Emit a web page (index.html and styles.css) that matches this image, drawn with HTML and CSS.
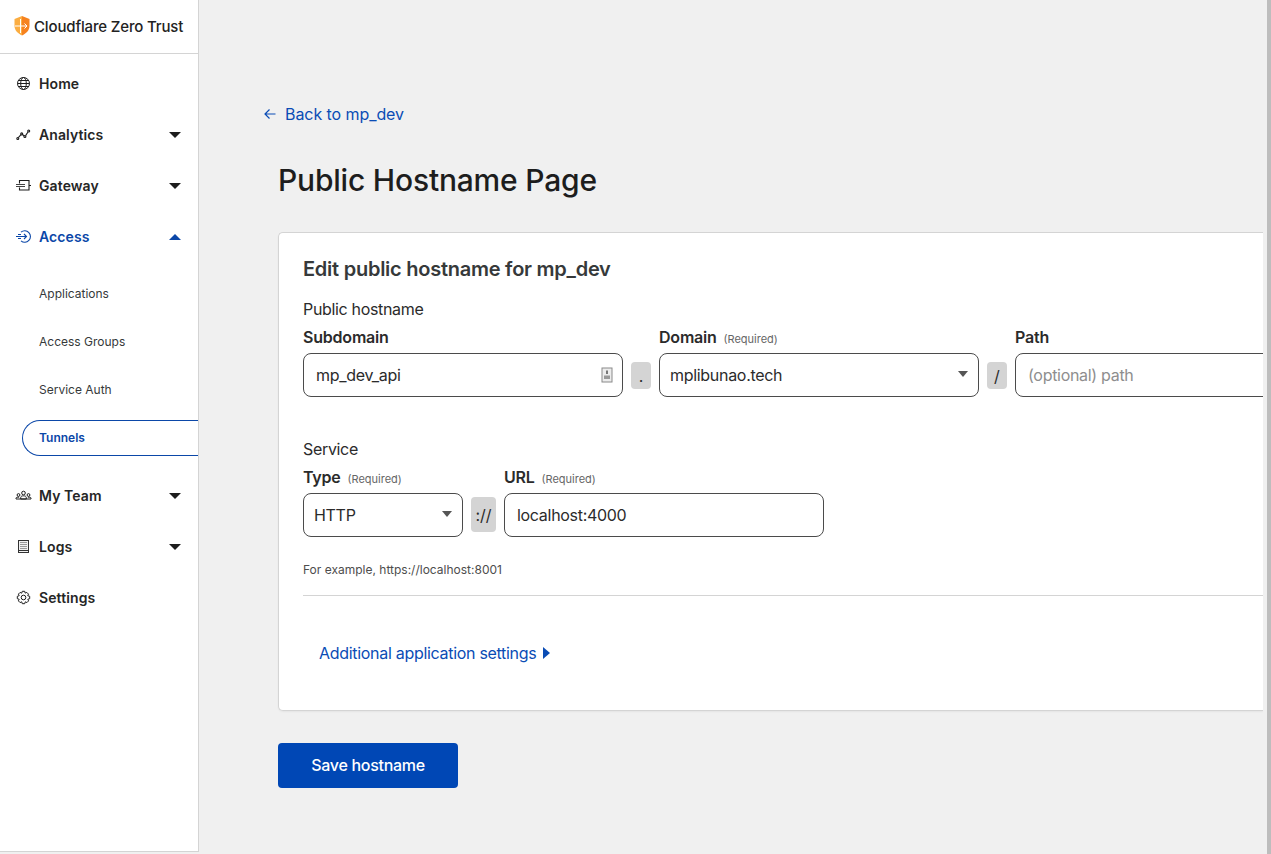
FILE: index.html
```html
<!DOCTYPE html>
<html lang="en">
<head>
<meta charset="utf-8">
<title>Public Hostname Page</title>
<link rel="stylesheet" href="styles.css">
</head>
<body>
<div class="app">
  <aside class="sidebar">
    <div class="brand">
      <svg class="logo" width="16" height="20" viewBox="0 0 16 20"><path d="M8 0 L15.5 3 V10 C15.5 14.5 12 17.5 8 19.5 Z" fill="#f6821f"/><path d="M8 0 L0.5 3 V10 C0.5 14.5 4 17.5 8 19.5 Z" fill="#fbad41"/><path d="M1 10 H13 M10.5 7.5 L13 10 L10.5 12.5 M6.5 3 V17" fill="none" stroke="#fff" stroke-width="1"/></svg>
      <span>Cloudflare Zero Trust</span>
    </div>
    <nav class="nav">
      <a class="item">
        <svg class="ico" viewBox="0 0 17 17"><g fill="none" stroke="#1d1d1d" stroke-width="1"><circle cx="8.5" cy="8.5" r="6"/><ellipse cx="8.5" cy="8.5" rx="2.8" ry="6"/><path d="M2.5 8.5H14.5M3.3 5.5H13.7M3.3 11.5H13.7"/></g></svg>
        <span>Home</span>
      </a>
      <a class="item">
        <svg class="ico" viewBox="0 0 17 17"><g fill="none" stroke="#1d1d1d" stroke-width="1.1"><path d="M3.3 11.7L6 8.7M7.4 8.4L9.2 10M10.6 9.6L13 6"/><circle cx="2.8" cy="12.5" r="1"/><circle cx="6.7" cy="7.9" r="1"/><circle cx="9.9" cy="10.5" r="1"/><circle cx="13.7" cy="5" r="1"/></g></svg>
        <span>Analytics</span><i class="caret"></i>
      </a>
      <a class="item">
        <svg class="ico" viewBox="0 0 17 17"><g fill="none" stroke="#1d1d1d" stroke-width="1.1"><path d="M4.5 6.5V3.5H14V13H4.5V10.5"/><path d="M1 7.5H10M1 9.5H10" stroke="#444"/><path d="M14 8.5H16"/></g></svg>
        <span>Gateway</span><i class="caret"></i>
      </a>
      <a class="item active">
        <svg class="ico" viewBox="0 0 17 17"><g fill="none" stroke="#0b47a8" stroke-width="1.1"><path d="M6 4.2A5.7 5.7 0 1 1 6 12.8"/><path d="M1 8.5H11.5M9 6L11.5 8.5L9 11M3 6.5H6M3 10.5H6"/></g></svg>
        <span>Access</span><i class="caret up"></i>
      </a>
      <div class="subnav">
        <a class="sub">Applications</a>
        <a class="sub">Access Groups</a>
        <a class="sub">Service Auth</a>
        <a class="sub current">Tunnels</a>
      </div>
      <a class="item">
        <svg class="ico" viewBox="0 0 17 17"><g fill="none" stroke="#1d1d1d" stroke-width="1"><circle cx="8.5" cy="6" r="1.8"/><path d="M5.7 12V10.6C5.7 9.4 6.9 8.8 8.5 8.8S11.3 9.4 11.3 10.6V12Z"/><circle cx="3.5" cy="8" r="1.4"/><circle cx="13.5" cy="8" r="1.4"/><path d="M1 12V11.2C1 10.4 2.1 10 4.1 10.2M16 12V11.2C16 10.4 14.9 10 12.9 10.2M1 12H16"/></g></svg>
        <span>My Team</span><i class="caret"></i>
      </a>
      <a class="item">
        <svg class="ico" viewBox="0 0 17 17"><rect x="3.5" y="2.5" width="10" height="12" fill="#f2f2f2" stroke="#333" stroke-width="1"/><path d="M5 4.5H12M5 6.5H12M5 8.5H12M5 10.5H12" stroke="#9a9a9a" stroke-width="1"/><path d="M3.5 12.5H13.5" stroke="#333"/></svg>
        <span>Logs</span><i class="caret"></i>
      </a>
      <a class="item">
        <svg class="ico" viewBox="0 0 17 17"><g fill="none" stroke="#1d1d1d" stroke-width="1"><circle cx="8.5" cy="8.5" r="2.3"/><path d="M7.3 2.3H9.7L10.2 4.1L11.8 3.4L13.5 5.1L12.7 6.7L14.7 7.3V9.7L12.8 10.3L13.6 11.9L11.9 13.6L10.3 12.8L9.7 14.7H7.3L6.7 12.8L5.1 13.6L3.4 11.9L4.2 10.3L2.3 9.7V7.3L4.2 6.7L3.4 5.1L5.1 3.4L6.7 4.2Z"/></g></svg>
        <span>Settings</span>
      </a>
    </nav>
  </aside>
  <main class="main">
    <a class="back"><svg class="arrow" width="12" height="12" viewBox="0 0 12 12"><path d="M11.5 6H1M5.5 1.5L1 6L5.5 10.5" fill="none" stroke="#0a4cb5" stroke-width="1.2"/></svg>Back to mp_dev</a>
    <h1 class="title">Public Hostname Page</h1>
    <section class="card">
      <h2 class="card-title">Edit public hostname for mp_dev</h2>
      <div class="group-label">Public hostname</div>
      <div class="row">
        <div class="field w320">
          <label class="label">Subdomain</label>
          <div class="input">mp_dev_api
            <svg class="contact" width="12" height="16" viewBox="0 0 12 16"><rect x="1" y="1" width="10" height="14" fill="#ececec" stroke="#8a8a8a"/><path d="M6 3.5V7" stroke="#777" stroke-width="2"/><rect x="3" y="8.5" width="6" height="3.5" fill="#999"/></svg>
          </div>
        </div>
        <span class="sep dot">.</span>
        <div class="field w320">
          <label class="label">Domain <small>(Required)</small></label>
          <div class="input compact">mplibunao.tech<i class="tri"></i></div>
        </div>
        <span class="sep slash">/</span>
        <div class="field w320 open">
          <label class="label">Path</label>
          <div class="input placeholder">(optional) path</div>
        </div>
      </div>
      <div class="group-label second">Service</div>
      <div class="row">
        <div class="field w160">
          <label class="label">Type <small>(Required)</small></label>
          <div class="input compact">HTTP<i class="tri"></i></div>
        </div>
        <span class="sep proto">://</span>
        <div class="field w320">
          <label class="label">URL <small>(Required)</small></label>
          <div class="input">localhost:4000</div>
        </div>
      </div>
      <p class="hint">For example, https://localhost:8001</p>
      <hr class="rule">
      <a class="more">Additional application settings<i class="tri-right"></i></a>
    </section>
    <button class="save">Save hostname</button>
  </main>
  <div class="scrollbar"><div class="thumb"></div></div>
</div>
</body>
</html>
```
FILE: styles.css
```css
* { box-sizing: border-box; }
html, body { margin: 0; height: 100%; overflow: hidden; }
body { font-family: Inter, "Liberation Sans", sans-serif; color: #1d1d1d; background: #f0f0f0; }
.app { display: flex; height: 854px; width: 1271px; overflow: hidden; }

.sidebar { width: 199px; height: 852px; flex: none; background: #fff; border-right: 1px solid #d4d4d4; border-bottom: 1px solid #d4d4d4; }
.brand { height: 54px; border-bottom: 1px solid #d4d4d4; display: flex; align-items: center; padding-left: 14px; gap: 4px; font-size: 15px; font-weight: 500; color: #222; letter-spacing: -0.15px; padding-bottom: 1px; }
.logo { flex: none; margin-top: -1px; }
.nav { display: flex; flex-direction: column; padding-top: 4px; }
.item { height: 51px; display: flex; align-items: center; padding-left: 15px; font-size: 14px; font-weight: 600; color: #262626; letter-spacing: 0.1px; }
.ico { width: 17px; height: 17px; flex: none; margin-right: 7px; }
.caret { margin-left: auto; margin-right: 17px; width: 0; height: 0; border-left: 6px solid transparent; border-right: 6px solid transparent; border-top: 6px solid #1d1d1d; }
.caret.up { border-top: 0; border-bottom: 6px solid #0b47a8; }
.active { color: #0b47a8; }
.subnav { display: flex; flex-direction: column; padding-top: 8px; padding-bottom: 14px; }
.sub { height: 36px; margin-top: 12px; margin-left: 22px; padding: 0 0 2px 16px; display: flex; align-items: center; font-size: 12px; color: #36393a; border: 1px solid transparent; border-right: 0; }
.sub:first-child { margin-top: 6px; }
.sub.current { border-color: #0b47a8; border-radius: 18px 0 0 18px; color: #0b47a8; font-weight: 600; }

.main { flex: 1; min-width: 0; padding: 104px 0 0 64px; overflow: hidden; }
.back { display: flex; align-items: center; height: 20px; color: #0a4cb5; font-size: 16px; letter-spacing: -0.07px; }
.arrow { flex: none; margin: 0 9px 0 1px; }
.title { margin: 36px 0 0 15px; font-size: 30px; line-height: 40px; font-weight: 500; color: #1d1d1d; letter-spacing: -0.2px; }
.card { margin: 32px 0 0 15px; width: 985px; height: 479px; background: #fff; border: 1px solid #d4d4d4; border-right: 0; border-radius: 5px 0 0 5px; padding: 24px 0 0 24px; overflow: hidden; box-shadow: 0 1px 2px rgba(0,0,0,.05); }
.card-title { margin: 0; font-size: 20px; line-height: 24px; font-weight: 600; color: #36393a; letter-spacing: -0.25px; }
.group-label { margin-top: 18px; font-size: 16px; line-height: 20px; color: #2b2b2b; letter-spacing: -0.33px; }
.group-label.second { margin-top: 42px; }
.row { display: flex; gap: 8px; align-items: flex-end; margin-top: 8px; width: 1100px; }
.field { display: flex; flex-direction: column; flex: none; }
.w320 { width: 320px; }
.w160 { width: 160px; }
.label { height: 20px; font-size: 16px; font-weight: 600; line-height: 20px; color: #2b2b2b; margin-bottom: 6px; letter-spacing: -0.2px; }
.label small { font-size: 11px; line-height: 1; font-weight: 400; color: #666; margin-left: 3px; letter-spacing: 0; }
.input { position: relative; height: 44px; border: 1px solid #4b4b4b; border-radius: 8px; padding-left: 12px; display: flex; align-items: center; font-size: 16px; color: #2b2b2b; background: #fff; letter-spacing: -0.3px; }
.input.compact { padding-left: 10px; }
.placeholder { color: #8e8e8e; }
.contact { position: absolute; right: 9px; top: 13px; }
.tri { position: absolute; right: 10px; top: 17px; width: 0; height: 0; border-left: 5.5px solid transparent; border-right: 5.5px solid transparent; border-top: 6px solid #555; }
.sep { flex: none; background: #d4d4d4; border-radius: 4px; display: flex; align-items: center; justify-content: center; font-size: 16px; color: #2b2b2b; margin-bottom: 8px; }
.dot, .slash { width: 20px; height: 27px; }
.proto { width: 25px; height: 35px; margin-bottom: 5px; }
.hint { margin: 23px 0 0; font-size: 12px; line-height: 20px; color: #4d4d4d; }
.rule { margin: 15px 0 0; border: 0; border-top: 1px solid #d4d4d4; }
.more { display: inline-flex; align-items: center; margin: 47px 0 0 16px; color: #0a4cb5; font-size: 16px; line-height: 20px; letter-spacing: -0.3px; }
.tri-right { margin-left: 7px; width: 0; height: 0; border-top: 6px solid transparent; border-bottom: 6px solid transparent; border-left: 7px solid #0a4cb5; }
.save { display: block; margin: 32px 0 0 15px; padding: 0 0 2px; width: 180px; height: 45px; background: #0047b5; color: #fff; border: 0; border-radius: 4px; font: 500 16px Inter, "Liberation Sans", sans-serif; letter-spacing: -0.3px; }

.scrollbar { position: absolute; top: 0; right: 0; width: 8px; height: 854px; background: #f0f0f0; }
.thumb { margin-left: 4px; width: 4px; height: 854px; background: #bdbdbd; }
```
